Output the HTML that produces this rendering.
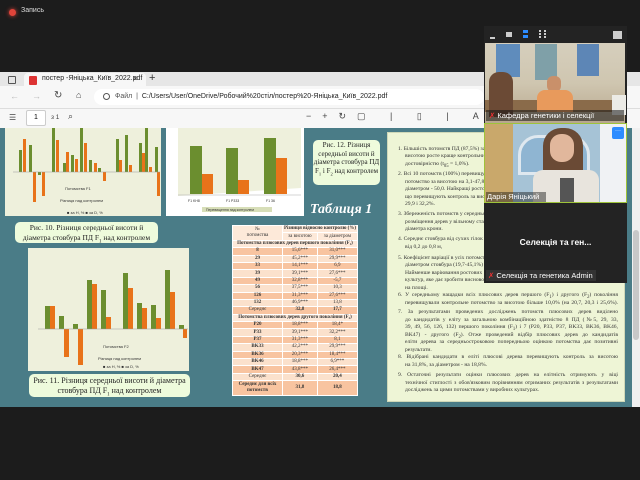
<!DOCTYPE html>
<html><head><meta charset="utf-8"><style>
*{margin:0;padding:0;box-sizing:border-box}
body{width:640px;height:480px;background:#1c1c1c;position:relative;overflow:hidden;font-family:"Liberation Sans",sans-serif}
.a{position:absolute}
.serif{font-family:"Liberation Serif",serif}
.cap{background:#eefbdc;border-radius:5px;color:#222;text-align:center;font-family:"Liberation Serif",serif;font-size:8px;line-height:10px}
table{border-collapse:collapse;font-family:"Liberation Serif",serif;font-size:5px;color:#333}
td{border:1px solid #fff;text-align:center;height:7.4px;padding:0;line-height:6px}
.o{background:#f8c4a0}.l{background:#fbe1cc}.h{background:#fde9d9}
.ln{position:absolute;left:398px;width:220px;font-family:"Liberation Serif",serif;font-size:5.6px;line-height:7px;color:#333;white-space:nowrap;text-align:justify;text-align-last:justify;overflow:hidden}
.ln.e{text-align-last:left}
.ln.i{left:405px;width:213px}
</style></head><body>
<div class="a" style="left:9px;top:9px;width:7px;height:7px;border-radius:50%;background:#e0443a;box-shadow:0 0 4px #e0443a"></div>
<div class="a" style="left:21px;top:7px;font-size:7px;color:#ddd">Запись</div>

<div class="a" style="left:0;top:72px;width:640px;height:16px;background:#e6e6e6"></div>
<div class="a" style="left:0;top:86px;width:640px;height:22px;background:#f7f7f7"></div>
<div class="a" style="left:8px;top:76px;width:8px;height:8px;border:1px solid #555;border-radius:1px"></div>
<div class="a" style="left:24px;top:73px;width:122px;height:15px;background:#f7f7f7;border-radius:4px 4px 0 0"></div>
<div class="a" style="left:29px;top:76px;width:8px;height:9px;background:#d33;border-radius:1px"></div>
<div class="a" style="left:42px;top:75px;font-size:7px;color:#222">постер -Яніцька_Київ_2022.pdf</div>
<div class="a" style="left:133px;top:74px;font-size:8px;color:#333">×</div>
<div class="a" style="left:149px;top:72px;font-size:11px;color:#333">+</div>
<div class="a" style="left:10px;top:91px;font-size:9px;color:#bbb">←</div>
<div class="a" style="left:32px;top:91px;font-size:9px;color:#bbb">→</div>
<div class="a" style="left:54px;top:90px;font-size:10px;color:#444">↻</div>
<div class="a" style="left:76px;top:90px;font-size:9px;color:#444">⌂</div>
<div class="a" style="left:94px;top:89px;width:390px;height:16px;background:#fff;border-radius:8px"></div>
<div class="a" style="left:103px;top:93px;width:7px;height:7px;border:1px solid #555;border-radius:50%"></div>
<div class="a" style="left:115px;top:93px;font-size:7px;color:#555">Файл &nbsp;|&nbsp; <span style="color:#222">C:/Users/User/OneDrive/Робочий%20стіл/постер%20-Яніцька_Київ_2022.pdf</span></div>
<div class="a" style="left:0;top:108px;width:640px;height:20px;background:#f7f7f7;border-top:1px solid #ddd"></div>
<div class="a" style="left:9px;top:113px;font-size:8px;color:#444">☰</div>
<div class="a" style="left:26px;top:110px;width:20px;height:16px;border:1px solid #ccc;background:#fff;border-radius:2px;font-size:7px;text-align:center;line-height:14px">1</div>
<div class="a" style="left:51px;top:114px;font-size:6.5px;color:#444">з 1</div>
<div class="a" style="left:68px;top:111px;font-size:9px;color:#444">⌕</div>
<div class="a" style="left:306px;top:111px;font-size:9px;color:#444;letter-spacing:11px;white-space:nowrap">−+↻▢ | ▯ | Aᴬ | ∀ ⌄ ∀</div>

<div class="a" style="left:0;top:128px;width:632px;height:279px;background:#4a7c87"></div>
<div class="a" style="left:632px;top:128px;width:8px;height:279px;background:#f0f0f0"></div>
<div class="a" style="left:633px;top:230px;width:6px;height:110px;background:#c8c8c8;border-radius:3px"></div>

<div class="a" style="left:5px;top:128px;width:156px;height:88px;background:#eef0dc"></div>
<svg class="a" style="left:5px;top:128px" width="156" height="88">
<g transform="translate(0,7)">
<g fill="#6b8e2f">
<rect x="14" y="15" width="3" height="22"/><rect x="24" y="10" width="3" height="27"/><rect x="33" y="37" width="3" height="3"/><rect x="47" y="-7" width="3" height="44"/><rect x="58" y="28" width="3" height="9"/><rect x="66" y="20" width="3" height="17"/><rect x="75" y="-7" width="3" height="44"/><rect x="84" y="25" width="3" height="12"/><rect x="93" y="33" width="3" height="4"/><rect x="111" y="4" width="3" height="33"/><rect x="120" y="0" width="3" height="37"/><rect x="134" y="8" width="3" height="29"/><rect x="140" y="-7" width="3" height="44"/><rect x="150" y="12" width="3" height="25"/></g>
<g fill="#e8731a">
<rect x="18" y="4" width="3" height="33"/><rect x="28" y="37" width="3" height="30"/><rect x="37" y="37" width="3" height="24"/><rect x="51" y="5" width="3" height="32"/><rect x="61" y="17" width="3" height="20"/><rect x="70" y="24" width="3" height="13"/><rect x="79" y="8" width="3" height="29"/><rect x="89" y="28" width="3" height="9"/><rect x="98" y="37" width="3" height="9"/><rect x="114" y="25" width="3" height="12"/><rect x="124" y="30" width="3" height="7"/><rect x="137" y="18" width="3" height="19"/><rect x="144" y="32" width="3" height="5"/><rect x="152" y="37" width="3" height="24"/></g>
<line x1="8" y1="37" x2="155" y2="37" stroke="#999" stroke-width=".5"/>
</g>
<text x="60" y="62" font-size="4" fill="#333">Потомства F1</text>
<text x="55" y="74" font-size="4" fill="#333">Різниця над контролем</text>
<text x="62" y="86" font-size="4" fill="#333">■ за H, %  ■ за D, %</text>
</svg>

<div class="a" style="left:166px;top:128px;width:138px;height:88px;background:#fff"></div>
<svg class="a" style="left:166px;top:128px" width="138" height="88">
<polygon points="12,0 135,0 135,60 12,68" fill="#eef0dc"/>
<g fill="#6b8e2f"><rect x="24" y="18" width="12" height="48"/><rect x="60" y="20" width="12" height="46"/><rect x="98" y="10" width="12" height="56"/></g>
<g fill="#e8731a"><rect x="36" y="46" width="11" height="20"/><rect x="72" y="52" width="11" height="14"/><rect x="110" y="30" width="11" height="36"/></g>
<line x1="12" y1="67" x2="135" y2="67" stroke="#aaa" stroke-width=".6"/>
<text x="22" y="74" font-size="3.5" fill="#333">F1 KH8</text><text x="60" y="74" font-size="3.5" fill="#333">F1 P333</text><text x="100" y="74" font-size="3.5" fill="#333">F1 36</text>
<rect x="36" y="79" width="70" height="5" fill="#d7deb8"/>
<text x="40" y="83" font-size="3.5" fill="#333">Перевищення над контролем</text>
</svg>

<div class="a cap" style="left:313px;top:140px;width:67px;height:45px;padding-top:1px;font-size:7px;line-height:8.6px">Рис. 12. Різниця середньої висоти й діаметра стовбура ПД F<sub style="font-size:4.5px">1</sub> і F<sub style="font-size:4.5px">2</sub> над контролем</div>
<div class="a serif" style="left:310px;top:202px;font-size:14px;font-weight:bold;font-style:italic;color:#fff">Таблиця 1</div>

<div class="a cap" style="left:15px;top:222px;width:143px;height:21px;padding-top:1px;font-size:7.5px">Рис. 10. Різниця середньої висоти й<br>діаметра стовбура ПД F<sub style="font-size:5px">1</sub> над контролем</div>

<div class="a" style="left:28px;top:248px;width:161px;height:123px;background:#eef0dc"></div>
<svg class="a" style="left:28px;top:248px" width="161" height="123">
<g fill="#6b8e2f"><rect x="17" y="58" width="5" height="23"/><rect x="31" y="68" width="5" height="13"/><rect x="45" y="76" width="5" height="5"/><rect x="59" y="32" width="5" height="49"/><rect x="73" y="42" width="5" height="39"/><rect x="95" y="25" width="5" height="56"/><rect x="109" y="55" width="5" height="26"/><rect x="123" y="57" width="5" height="24"/><rect x="137" y="22" width="5" height="59"/><rect x="151" y="77" width="5" height="4"/></g>
<g fill="#e8731a"><rect x="22" y="58" width="5" height="23"/><rect x="36" y="81" width="5" height="28"/><rect x="50" y="81" width="5" height="36"/><rect x="64" y="36" width="5" height="45"/><rect x="78" y="69" width="5" height="12"/><rect x="100" y="40" width="5" height="41"/><rect x="114" y="60" width="5" height="21"/><rect x="128" y="70" width="5" height="11"/><rect x="142" y="44" width="5" height="37"/><rect x="155" y="81" width="4" height="9"/></g>
<line x1="10" y1="81" x2="160" y2="81" stroke="#999" stroke-width=".5"/>
<text x="75" y="100" font-size="4" fill="#333">Потомства F2</text>
<text x="70" y="112" font-size="4" fill="#333">Різниця над контролем</text>
<text x="75" y="120" font-size="4" fill="#333">■ за H, %  ■ за D, %</text>
</svg>

<div class="a cap" style="left:29px;top:374px;width:161px;height:23px;padding-top:2px">Рис. 11. Різниця середньої висоти й діаметра<br>стовбура ПД F<sub style="font-size:5px">1</sub> над контролем</div>

<table class="a" style="left:232px;top:225px;width:126px">
<tr class="h"><td rowspan="2" style="width:50px">№<br>потомства</td><td colspan="2"><b>Різниця відносно контролю (%)</b></td></tr>
<tr class="h"><td>за висотою</td><td>за діаметром</td></tr>
<tr class="h"><td colspan="3"><b>Потомства плюсових дерев першого покоління (F₁)</b></td></tr>
<tr class="o"><td><b>8</b></td><td>15,6***</td><td>31,0***</td></tr>
<tr class="l"><td><b>29</b></td><td>45,2***</td><td>29,9***</td></tr>
<tr class="o"><td><b>33</b></td><td>14,1***</td><td>6,9</td></tr>
<tr class="l"><td><b>39</b></td><td>39,1***</td><td>27,6***</td></tr>
<tr class="o"><td><b>49</b></td><td>32,8***</td><td>-5,7</td></tr>
<tr class="l"><td><b>56</b></td><td>37,5***</td><td>10,3</td></tr>
<tr class="o"><td><b>126</b></td><td>31,3***</td><td>27,6***</td></tr>
<tr class="l"><td><b>132</b></td><td>46,9***</td><td>13,8</td></tr>
<tr class="o"><td>Середнє</td><td><b>32,8</b></td><td><b>17,7</b></td></tr>
<tr class="h"><td colspan="3"><b>Потомства плюсових дерев другого покоління (F₂)</b></td></tr>
<tr class="o"><td><b>P20</b></td><td>18,8***</td><td>18,4*</td></tr>
<tr class="l"><td><b>P33</b></td><td>39,1***</td><td>32,2***</td></tr>
<tr class="o"><td><b>P37</b></td><td>31,3***</td><td>8,1</td></tr>
<tr class="l"><td><b>BK33</b></td><td>42,2***</td><td>29,9***</td></tr>
<tr class="o"><td><b>BK36</b></td><td>20,3***</td><td>18,4***</td></tr>
<tr class="l"><td><b>BK46</b></td><td>18,8***</td><td>6,9***</td></tr>
<tr class="o"><td><b>BK47</b></td><td>43,8***</td><td>26,4***</td></tr>
<tr class="l"><td>Середнє</td><td><b>30,6</b></td><td><b>20,4</b></td></tr>
<tr class="o"><td style="height:15px"><b>Середнє для всіх потомств</b></td><td><b>31,8</b></td><td><b>18,8</b></td></tr>
</table>

<div class="a" style="left:387px;top:132px;width:238px;height:270px;background:#eef5d6;border:1px solid #cfd8b8"></div>
<div class="ln e" style="top:146px">1. Більшість потомств ПД (87,5%) за висотою</div>
<div class="ln i e" style="top:153px">висотою росте краще контрольних, з</div>
<div class="ln i e" style="top:161px">достовірністю (t<sub>05</sub> = 1,0%).</div>
<div class="ln e" style="top:171px">2. Всі 10 потомств (100%) перевищують</div>
<div class="ln i e" style="top:179px">потомство за висотою на 3,1-47,8%, за</div>
<div class="ln i e" style="top:186px">діаметром - 50,0. Найкращі ростові</div>
<div class="ln i e" style="top:194px">що перевищують контроль за висотою</div>
<div class="ln i e" style="top:201px">29,9 і 32,2%.</div>
<div class="ln e" style="top:211px">3. Збереженість потомств у середньому</div>
<div class="ln i e" style="top:219px">розміщення дерев у вільному стані</div>
<div class="ln i e" style="top:226px">діаметра крони.</div>
<div class="ln e" style="top:236px">4. Середнє стовбура від сухих гілок</div>
<div class="ln i e" style="top:244px">від 0,2 до 0,8 м,</div>
<div class="ln e" style="top:255px">5. Коефіцієнт варіації в усіх потомств</div>
<div class="ln i e" style="top:262px">діаметром стовбура (19,7-45,1%)</div>
<div class="ln i e" style="top:270px">Найменше варіювання ростових</div>
<div class="ln i e" style="top:277px">культур, яке дає зробити висновок</div>
<div class="ln i e" style="top:285px">на площі.</div>
<div class="ln" style="top:292px">6. У середньому нащадки всіх плюсових дерев першого (F<sub>1</sub>) і другого (F<sub>2</sub>) покоління</div>
<div class="ln i" style="top:300px">перевищували контрольне потомство за висотою більше 10,0% (на 20,7, 20,3 і 25,6%).</div>
<div class="ln" style="top:309px">7. За результатами проведених досліджень потомств плюсових дерев виділено</div>
<div class="ln i" style="top:317px">до кандидатів у еліту за загальною комбінаційною здатністю 8 ПД (№5, 29, 33,</div>
<div class="ln i" style="top:324px">39, 49, 56, 126, 132) першого покоління (F<sub>1</sub>) і 7 (P20, P33, P37, BK33, BK36, BK46,</div>
<div class="ln i" style="top:332px">BK47) - другого (F<sub>2</sub>). Отже проведений відбір плюсових дерев до кандидатів</div>
<div class="ln i" style="top:339px">еліти дерева за середньостроковою попередньою оцінкою потомства дає позитивні</div>
<div class="ln i e" style="top:347px">результати.</div>
<div class="ln" style="top:354px">8. Відібрані кандидати в еліті плюсові дерева перевищують контроль за висотою</div>
<div class="ln i e" style="top:362px">на 31,8%, за діаметром - на 18,8%.</div>
<div class="ln" style="top:372px">9. Остаточні результати оцінки плюсових дерев на елітність отримують у віці</div>
<div class="ln i" style="top:380px">технічної стиглості з обов'язковим порівнянням отриманих результатів з результатами</div>
<div class="ln i e" style="top:387px">досліджень за цими потомствами у виробних культурах.</div>

<div class="a" style="left:484px;top:26px;width:143px;height:257px;background:#232323"></div>
<div class="a" style="left:490px;top:37px;width:5px;height:2px;background:#ccc"></div>
<div class="a" style="left:506px;top:32px;width:6px;height:5px;background:#ccc"></div>
<div class="a" style="left:523px;top:30px;width:5px;height:3px;background:#2d8cff"></div><div class="a" style="left:523px;top:35px;width:5px;height:3px;background:#2d8cff"></div>
<div class="a" style="left:539px;top:30px;width:7px;height:8px;border:2px dotted #ccc"></div>
<div class="a" style="left:613px;top:31px;width:9px;height:8px;border:1px solid #ccc;background:#ccc"></div>
<div class="a" style="left:485px;top:43px;width:140px;height:80px;background:linear-gradient(180deg,#d6cfbd 0%,#cfc6b0 50%,#b8a78e 100%)"></div>
<div class="a" style="left:496px;top:44px;width:24px;height:33px;background:#5f8cbc"></div>
<div class="a" style="left:535px;top:44px;width:22px;height:36px;background:#7fa0a8"></div>
<div class="a" style="left:577px;top:44px;width:22px;height:32px;background:#5d86b6"></div>
<div class="a" style="left:485px;top:100px;width:140px;height:12px;background:#8a6b4a"></div>
<div class="a" style="left:489px;top:72px;width:24px;height:45px;background:#6b4a35;border-radius:10px 10px 0 0"></div>
<div class="a" style="left:547px;top:76px;width:14px;height:16px;background:#c9906a;border-radius:6px"></div>
<div class="a" style="left:537px;top:90px;width:36px;height:22px;background:#e89a5c;border-radius:8px 8px 0 0"></div>
<div class="a" style="left:612px;top:95px;width:14px;height:20px;background:#ecebe6"></div>
<div class="a" style="left:486px;top:110px;width:138px;height:11px;background:rgba(20,20,20,.55)"></div>
<div class="a" style="left:489px;top:111px;font-size:7.5px;color:#fff;white-space:nowrap"><span style="color:#e33">✗</span> Кафедра генетики і селекції</div>
<div class="a" style="left:484px;top:123px;width:143px;height:80px;border:1px solid #9ec33a;background:#a6c3d6"></div>
<div class="a" style="left:485px;top:124px;width:28px;height:78px;background:#c9a86b"></div>
<div class="a" style="left:600px;top:124px;width:26px;height:78px;background:#f0f2f4"></div>
<div class="a" style="left:518px;top:135px;width:72px;height:40px;border:3px solid #dfe8ef;border-radius:20px 20px 0 0;background:#8fb5d2"></div>
<div class="a" style="left:543px;top:128px;width:40px;height:74px;background:#6a4a35;border-radius:18px 18px 0 0"></div>
<div class="a" style="left:550px;top:134px;width:24px;height:28px;background:#e1b79c;border-radius:11px"></div>
<div class="a" style="left:533px;top:170px;width:66px;height:32px;background:#e8e4dd;border-radius:10px 10px 0 0"></div>
<div class="a" style="left:560px;top:178px;width:14px;height:24px;background:#555"></div>
<div class="a" style="left:612px;top:127px;width:12px;height:12px;background:#2d8cff;border-radius:2px;color:#fff;font-size:6px;text-align:center;line-height:9px">···</div>
<div class="a" style="left:486px;top:192px;width:60px;height:10px;background:rgba(20,20,20,.45)"></div>
<div class="a" style="left:487px;top:192px;font-size:7.5px;color:#fff;white-space:nowrap">Дарія Яніцький</div>
<div class="a" style="left:484px;top:237px;width:143px;text-align:center;font-size:8.5px;font-weight:bold;color:#fff">Селекція та ген...</div>
<div class="a" style="left:486px;top:270px;width:110px;height:11px;background:#333"></div>
<div class="a" style="left:488px;top:271px;font-size:7.5px;color:#fff;white-space:nowrap"><span style="color:#e33">✗</span> Селекція та генетика Admin</div>
</body></html>
